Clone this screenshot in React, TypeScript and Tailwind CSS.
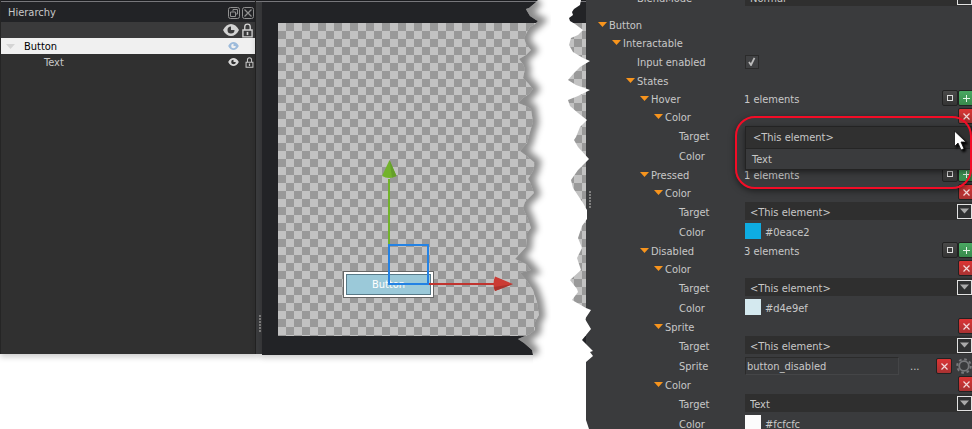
import { ReactNode, useId } from "react";

const TEAR =
  "M22 0 L19 3 13 8 10 9 11 11 14 16 20 20 22 21 19 24 14 27 11 32 8 38 10 44 15 50 10 55 3 59 7 64 9 69 7 78 12 83 17 89 13 94 7 98 2 103 10 106 15 109 17 122 14 132 11 143 4 151 12 157 19 163 17 171 12 179 14 182 18 193 9 202 7 208 12 219 15 228 11 233 10 247 -1 259 10 264 15 270 4 273 11 281 17 290 21 302 23 315 19 322 19 330 14 334 2 339 8 343 16 350 17 355";

const TEAR_RIGHT =
  "L17 429 73 429 70 420 70 362 77 356 74 352 77 351 66 340 75 329 69 319 75 310 70 308 56 300 62 292 61 289 54 280 65 270 61 258 66 248 62 238 66 226 71 219 71 210 67 203 57 188 55 180 62 170 73 159 62 147 58 140 60 137 64 127 71 120 62 113 54 106 52 100 62 96 74 90 60 85 52 80 58 73 64 67 74 61 67 58 57 52 53 45 55 38 62 35 67 30 59 24 54 21 53 18 57 15 56 12 58 9 64 5 65 0 Z";

function TornGap() {
  return (
    <svg className="pointer-events-none absolute -right-2 top-0 z-20 h-[429px] w-[78px] overflow-visible" viewBox="0 0 78 429" aria-hidden="true">
      <defs>
        <clipPath id="gap"><path d={TEAR + TEAR_RIGHT} /></clipPath>
        <filter id="soft" x="-50%" y="-5%" width="200%" height="110%"><feGaussianBlur stdDeviation="3" /></filter>
      </defs>
      <path d={TEAR + TEAR_RIGHT} fill="#fff" />
      <g clipPath="url(#gap)">
        <path d={TEAR} fill="none" stroke="#000" strokeOpacity="0.45" strokeWidth="12" filter="url(#soft)" />
      </g>
    </svg>
  );
}

function Eye({ className }: { className: string }) {
  return (
    <svg className={className} viewBox="0 0 16 12" aria-hidden="true">
      <path fill="currentColor" fillRule="evenodd" d="M0 6C2 2 5 0 8 0s6 2 8 6c-2 4-5 6-8 6S2 10 0 6Zm8-3.500a3.500 3.500 0 1 0 3.500 3.500H8Z" />
    </svg>
  );
}

function Lock({ className }: { className: string }) {
  return (
    <svg className={className} viewBox="0 0 12 16" fill="none" stroke="currentColor" strokeWidth="1.5" aria-hidden="true">
      <path d="M1 7.5h10v7.5H1zM3 7.500V4a3 3 0 0 1 6 0v3.500" />
      <path d="M6 9.500v3.500" strokeWidth="1.800" />
    </svg>
  );
}

function Hierarchy() {
  return (
    <aside className="flex h-[354px] w-64 shrink-0 flex-col border-x border-[#252525] bg-[#303030] text-[#c8c8c8] shadow-[0_3px_6px_rgba(0,0,0,0.2)]">
      <header className="flex h-[22px] items-center border-t border-[#1b1c1f] bg-[#222326] pr-px pt-0.5 shadow-[inset_0_1px_0_#77777b]">
        <h2 className="flex-1 pl-[7px]">Hierarchy</h2>
        <button aria-label="Float" className="mr-0.5 size-3">
          <svg viewBox="0 0 12 12" fill="none" stroke="#919191"><rect x=".5" y=".5" width="11" height="11" rx="2" /><path d="M5 4.500V2.500h4.500V7H7.500M2.500 5h5v4.500h-5z" /></svg>
        </button>
        <button aria-label="Close" className="size-3">
          <svg viewBox="0 0 12 12" fill="none" stroke="#919191"><rect x=".5" y=".5" width="11" height="11" rx="2" /><path d="m2.500 2.500 7 7m0-7-7 7" strokeWidth="1.300" /></svg>
        </button>
      </header>
      <div className="flex h-4 items-center justify-end gap-[3px] bg-[#3a3a3b] pr-0.5 text-[#d2d2d2]">
        <Eye className="h-3 w-4" />
        <Lock className="h-[15px] w-[11px]" />
      </div>
      <ul>
        <li className="flex h-4 items-center bg-[#f0f0f0] pl-[5px] pr-4 text-black">
          <svg className="h-[5px] w-[9px]" viewBox="0 0 9 5" aria-hidden="true"><path d="M0 0h9L4.500 5z" fill="#d4d4d4" /></svg>
          <span className="flex-1 pl-[9px]">Button</span>
          <Eye className="h-2 w-[11px] text-[#9dbbdb]" />
        </li>
        <li className="flex h-4 items-center pl-[43px] pr-px">
          <span className="flex-1">Text</span>
          <Eye className="mr-1.5 h-2 w-[11px] text-[#d8d8d8]" />
          <Lock className="h-[11px] w-[9px]" />
        </li>
      </ul>
    </aside>
  );
}

function Grip() {
  return <div className="h-[18px] w-0.5 bg-[repeating-linear-gradient(#808080_0_2px,transparent_2px_3px)]" />;
}

function Gizmo() {
  return (
    <svg className="absolute left-16 top-[136px] h-[140px] w-[174px]" viewBox="0 0 174 140" aria-hidden="true">
      <path d="M47 20V86" stroke="#72b32b" strokeWidth="2" />
      <path d="M47.500 1 54.500 17Q47 21 40 17Z" fill="#72b32b" />
      <path d="M47.500 1 50 18.500 54.500 17Z" fill="#659f2b" />
      <path d="M87 125H153" stroke="#c0342f" strokeWidth="2" />
      <path d="M171 125 153 117.500Q150 125 153 132Z" fill="#cb3b34" />
      <path d="M171 125 152 128 153 132Z" fill="#ab322c" />
      <rect x="47" y="86" width="39" height="39" fill="none" stroke="#2382e4" strokeWidth="2" />
    </svg>
  );
}

function Viewport() {
  return (
    <section className="relative min-w-0 flex-1">
      <div className="h-[355px] border-t border-[#1b1c1f] bg-[#222326] pl-4 pt-[22px] shadow-[0_3px_6px_rgba(0,0,0,0.2),inset_0_1px_0_#77777b]">
        <div className="relative h-[313px] overflow-hidden bg-[repeating-conic-gradient(#999_0_25%,#c2c2c2_0_50%)] bg-size-[16px_16px]">
          <div className="absolute left-[65px] top-[248px] border border-[#666] bg-white p-0.5">
            <button className="block h-[21px] w-[85px] border border-[#587987] bg-[#9bc9d9] text-white">Button</button>
          </div>
          <Gizmo />
        </div>
      </div>
      <TornGap />
    </section>
  );
}

function Caret() {
  return (
    <svg className="mb-0.5 h-[5px] w-[9px]" viewBox="0 0 9 5" aria-hidden="true"><path d="M0 0h9L4.500 5z" fill="#f7941d" /></svg>
  );
}

const CARET_INDENT = ["pl-3", "pl-[26px]", "pl-10", "pl-[54px]", "pl-[68px]"];

function DeleteButton() {
  return (
    <button aria-label="Remove" className="flex size-4 shrink-0 items-center justify-center rounded-xs border border-[#222] bg-linear-to-b from-[#dc3434] to-[#a83232]">
      <svg className="size-[7px]" viewBox="0 0 7 7" stroke="#f3dada" strokeWidth="1.200"><path d="m.5.5 6 6m0-6-6 6" /></svg>
    </button>
  );
}

function ListButtons() {
  return (
    <>
      <button aria-label="Resize list" className="flex size-4 shrink-0 items-center justify-center rounded-xs border border-[#222] bg-linear-to-b from-[#4a4a4a] to-[#353535]">
        <span className="size-1.5 border border-[#ddd]" />
      </button>
      <button aria-label="Add element" className="flex size-4 shrink-0 items-center justify-center rounded-xs border border-[#222] bg-linear-to-b from-[#4aa862] to-[#388a4c]">
        <svg className="size-[7px]" viewBox="0 0 7 7" stroke="#e6f5e9"><path d="M3.500 0v7M0 3.500h7" /></svg>
      </button>
    </>
  );
}

function Group({ level, title, count, removable }: { level: number; title: string; count?: number; removable?: boolean }) {
  return (
    <div className="flex h-[18px] items-center">
      <button className={"flex w-[158px] shrink-0 items-center gap-0.5 text-left " + CARET_INDENT[level]}>
        <Caret />
        {title}
      </button>
      <span className="flex-1">{count !== undefined && count + " elements"}</span>
      <div className="-mr-0.5 flex pb-0.5">
        {count !== undefined && <ListButtons />}
        {removable && <DeleteButton />}
      </div>
    </div>
  );
}

function Field({ label, id, shallow, children }: { label: string; id: string; shallow?: boolean; children: ReactNode }) {
  return (
    <div className="flex h-5 items-center">
      <label htmlFor={id} className={"w-[159px] shrink-0 " + (shallow ? "pl-[51px]" : "pl-[93px]")}>{label}</label>
      {children}
    </div>
  );
}

function SelectField({ label, value, options, shallow }: { label: string; value: string; options: string[]; shallow?: boolean }) {
  const id = useId();
  return (
    <Field label={label} id={id} shallow={shallow}>
      <div className="relative mb-0.5 h-[18px] flex-1 bg-[#2f2f2f]">
        <select id={id} defaultValue={value} className="block h-[18px] w-full appearance-none pl-[5px] pt-0.5 outline-none">
          {options.map((o) => <option key={o}>{o}</option>)}
        </select>
        <svg className="pointer-events-none absolute right-0 top-0.5 size-[15px]" viewBox="0 0 15 15" aria-hidden="true">
          <rect x=".5" y=".5" width="14" height="14" fill="#303132" stroke="#e2e2e2" />
          <path d="M3 4.500h9l-4.500 5z" fill="#aaa" />
        </svg>
      </div>
    </Field>
  );
}

function TargetField({ value }: { value: string }) {
  return <SelectField label="Target" value={value} options={["<This element>", "Text"]} />;
}

function ColorField({ hex, swatch }: { hex: string; swatch: string }) {
  const id = useId();
  return (
    <Field label="Color" id={id}>
      <span className={"mb-0.5 size-4 " + swatch} />
      <input id={id} defaultValue={hex} className="ml-1 w-24 outline-none" />
    </Field>
  );
}

function OpenTarget() {
  return (
    <div className="relative">
      <Field label="Target" id="hover-target">
        <span />
      </Field>
      <div id="hover-target" role="listbox" aria-label="Target" className="absolute left-[159px] right-0 top-0 z-10 border border-[#232323] bg-[#3a3b3d] shadow-[0_2px_6px_rgba(0,0,0,0.5)]">
        <div role="option" aria-selected="true" className="flex h-[22px] items-center border-b border-[#252525] bg-[#303030] pl-[7px]">&lt;This element&gt;</div>
        <div role="option" aria-selected="false" className="flex h-5 items-center pl-1.5">Text</div>
      </div>
      <div className="pointer-events-none absolute -top-2.5 left-[149px] right-0 z-20 h-[73px] rounded-[20px] border-2 border-[#f30c26] shadow-[0_2px_6px_rgba(0,0,0,0.5)]" />
      <svg className="pointer-events-none absolute right-1 top-1 z-30 h-[22px] w-[15px] drop-shadow-[2px_2px_1px_#000]" viewBox="0 0 15 22" aria-hidden="true">
        <path d="M1.500 1v15.500l3.500-3.500 3 7 3-1.300-3-6.700h5z" fill="#fff" stroke="#111" strokeWidth=".8" />
      </svg>
    </div>
  );
}

function Inspector() {
  return (
    <main className="relative w-[386px] shrink-0 overflow-hidden bg-[#3a3b3d] text-[#c8c8c8]">
      <div className="absolute left-[3px] top-[191px]"><Grip /></div>
      <div className="-mt-3 mb-2">
        <SelectField shallow label="BlendMode" value="Normal" options={["Normal"]} />
      </div>
      <Group level={0} title="Button" />
      <Group level={1} title="Interactable" />
      <Field shallow label="Input enabled" id="input-enabled">
        <span className="relative size-[14px]">
          <input id="input-enabled" type="checkbox" defaultChecked className="block size-[14px] appearance-none border border-[#2b2b2b] bg-[#404143]" />
          <svg className="pointer-events-none absolute left-[3px] top-0.5 h-[9px] w-2" viewBox="0 0 8 9" fill="none" stroke="#bbb" strokeWidth="1.800" aria-hidden="true"><path d="m1 5 2 3L6.500.8" /></svg>
        </span>
      </Field>
      <Group level={2} title="States" />
      <Group level={3} title="Hover" count={1} />
      <Group level={4} title="Color" removable />
      <OpenTarget />
      <div className="flex h-5 items-center pl-[93px]">Color</div>
      <Group level={3} title="Pressed" count={1} />
      <Group level={4} title="Color" removable />
      <TargetField value="<This element>" />
      <ColorField hex="#0eace2" swatch="bg-[#0eace2]" />
      <Group level={3} title="Disabled" count={3} />
      <Group level={4} title="Color" removable />
      <TargetField value="<This element>" />
      <ColorField hex="#d4e9ef" swatch="bg-[#d4e9ef]" />
      <Group level={4} title="Sprite" removable />
      <TargetField value="<This element>" />
      <Field label="Sprite" id="sprite">
        <input id="sprite" defaultValue="button_disabled" className="h-[18px] min-w-0 flex-1 border border-[#444547] border-t-[#2b2b2b] border-l-[#2b2b2b] bg-[#38393b] pl-px outline-none" />
        <button aria-label="Browse" className="w-[37px] pl-[11px] text-left">...</button>
        <DeleteButton />
        <button aria-label="Sprite settings" className="ml-1 size-4">
          <svg viewBox="0 0 16 16" fill="none" stroke="#77787b" aria-hidden="true"><circle cx="8" cy="8" r="4.800" strokeWidth="1.800" /><circle cx="8" cy="8" r="6.800" strokeWidth="2" strokeDasharray="2.670 2.670" /></svg>
        </button>
      </Field>
      <Group level={4} title="Color" removable />
      <TargetField value="Text" />
      <ColorField hex="#fcfcfc" swatch="bg-[#fcfcfc]" />
    </main>
  );
}

export default function App() {
  return (
    <div className="flex h-screen overflow-hidden bg-white font-['DejaVu_Sans_Condensed','Open_Sans',sans-serif] text-[11px] leading-[17px]">
      <Hierarchy />
      <div className="flex h-[354px] w-1.5 shrink-0 items-end justify-end border-t border-[#1b1c1f] bg-[#3a3b3d] pb-[21px] pr-px shadow-[0_3px_6px_rgba(0,0,0,0.2),inset_0_1px_0_#77777b]"><Grip /></div>
      <Viewport />
      <Inspector />
    </div>
  );
}
